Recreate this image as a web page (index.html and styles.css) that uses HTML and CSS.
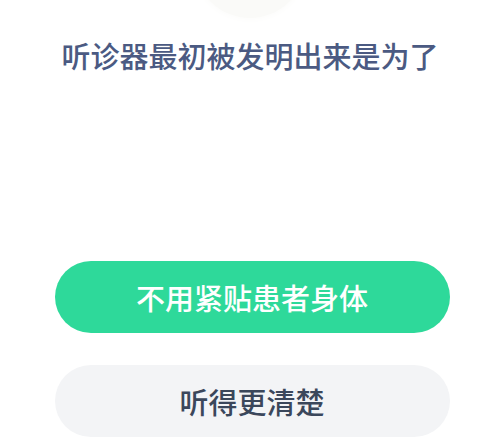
FILE: index.html
```html
<!DOCTYPE html>
<html lang="zh-CN">

<head>
  <meta charset="UTF-8" />
  <title>答题</title>
  <link rel="stylesheet" href="styles.css">
</head>

<body>
  <div class="page">
    <!-- 顶部图片底边 -->
    <div class="top-circle"></div>

    <h1 class="question">听诊器最初被发明出来是为了</h1>

    <div class="options">
      <button class="option correct">不用紧贴患者身体</button>
      <button class="option">听得更清楚</button>
    </div>
  </div>
</body>

</html>
```

FILE: styles.css
```css
body {
  margin: 0;
  background-color: #ffffff;
  font-family: "Noto Sans CJK SC", "Noto Sans", sans-serif;
  overflow: hidden;
}

.page {
  width: 500px;
  height: 448px;
  display: flex;
  flex-direction: column;
  align-items: center;
}

.top-circle {
  width: 110px;
  height: 110px;
  margin-top: -92px;
  border-radius: 50%;
  background-color: #fafaf8;
  box-shadow: 0 0 8px #fafaf8;
}

.question {
  margin: 17px 0 0;
  font-size: 29px;
  line-height: 40px;
  font-weight: 500;
  color: #4b5a82;
  text-align: center;
}

.options {
  margin: 186px 0 0 4px;
  width: 395px;
  display: flex;
  flex-direction: column;
  gap: 32px;
}

.option {
  height: 72px;
  border: none;
  border-radius: 36px;
  background-color: #f3f4f6;
  color: #3b475b;
  font-family: inherit;
  font-size: 29px;
  font-weight: 500;
  cursor: pointer;
}

.option.correct {
  background-color: #2ed99a;
  color: #ffffff;
}
```
